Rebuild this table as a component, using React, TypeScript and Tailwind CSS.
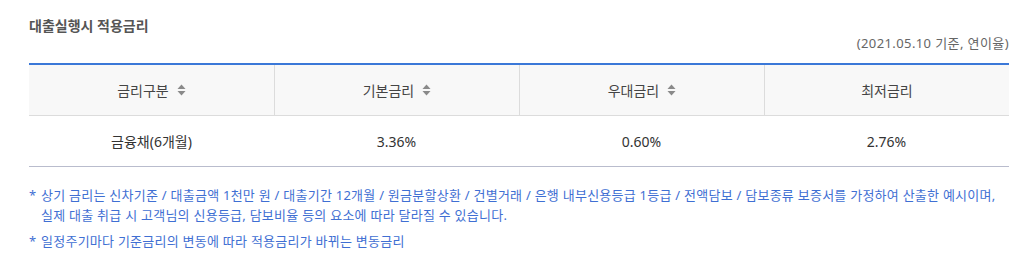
const headers = [
    { label: '금리구분', sortable: true },
    { label: '기본금리', sortable: true },
    { label: '우대금리', sortable: true },
    { label: '최저금리', sortable: false },
];

const row = ['금융채(6개월)', '3.36%', '0.60%', '2.76%'];

function SortIcon() {
    return (
        <svg width="9" height="12" viewBox="0 0 9 12" className="ml-2 inline-block">
            <path d="M4.5 0.5 L8.5 5 L0.5 5 Z" fill="#8a8a8a" />
            <path d="M0.5 7 L8.5 7 L4.5 11.5 Z" fill="#8a8a8a" />
        </svg>
    );
}

export default function App() {
    return (
        <div className="w-[1020px] h-[270px] bg-white pl-[29px] pr-[11px] pt-[16px] font-['Noto_Sans','Noto_Sans_CJK_KR',sans-serif]">
            {/* Title */}
            <h3 className="text-[14px] leading-[20px] font-bold text-[#555]">대출실행시 적용금리</h3>
            <div className="-mt-[2px] text-right text-[13px] leading-[18px] tracking-[0.4px] text-[#666]">(2021.05.10 기준, 연이율)</div>

            {/* Table */}
            <div className="mt-[11px] border-t-2 border-[#3b78d8]">
                <div className="grid grid-cols-4 bg-[#f8f8f8] border-b border-[#dcdcdc]">
                    {headers.map((h, i) => (
                        <div
                            key={h.label}
                            className={`h-[50px] flex items-center justify-center text-[14px] text-[#444] ${i > 0 ? 'border-l border-[#dcdcdc]' : ''}`}
                        >
                            {h.label}
                            {h.sortable && <SortIcon />}
                        </div>
                    ))}
                </div>
                <div className="grid grid-cols-4 border-b border-[#b9bccd]">
                    {row.map((cell) => (
                        <div key={cell} className="h-[50px] flex items-center justify-center text-[14px] text-[#333]">
                            {cell}
                        </div>
                    ))}
                </div>
            </div>

            {/* Notes */}
            <div className="mt-[18px] text-[13px] leading-[20px] tracking-[0.25px] text-[#3f6fd3] break-keep">
                <p className="pl-[12px] -indent-[12px]">
                    <span className="inline-block w-[12px] indent-0">*</span>상기 금리는 신차기준 / 대출금액 1천만 원 / 대출기간 12개월 / 원금분할상환 / 건별거래 / 은행 내부신용등급 1등급 / 전액담보 / 담보종류 보증서를 가정하여 산출한 예시이며, 실제 대출 취급 시 고객님의 신용등급, 담보비율 등의 요소에 따라 달라질 수 있습니다.
                </p>
                <p className="mt-[6px] pl-[12px] -indent-[12px]">
                    <span className="inline-block w-[12px] indent-0">*</span>일정주기마다 기준금리의 변동에 따라 적용금리가 바뀌는 변동금리
                </p>
            </div>
        </div>
    );
}
